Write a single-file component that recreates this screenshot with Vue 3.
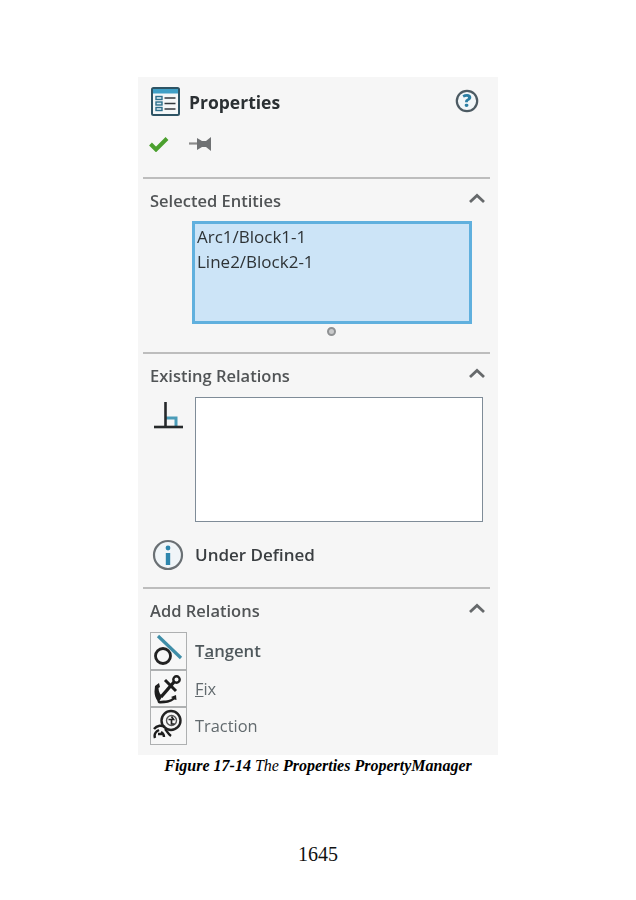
<template>
  <div class="page">
    <div class="panel">
      <div class="head">
        <svg class="head-icon" width="29" height="29" viewBox="0 0 29 29">
          <rect x="1" y="1" width="27" height="27" rx="1.5" fill="#f4f7f8" stroke="#2d5364" stroke-width="2" />
          <rect x="2" y="2" width="25" height="4.5" fill="#3f9fc6" />
          <g fill="#d8eaf2" stroke="#2d6f8c" stroke-width="1.4">
            <rect x="5" y="9.5" width="6" height="3" />
            <rect x="5" y="15" width="6" height="3" />
            <rect x="5" y="20.5" width="6" height="3" />
          </g>
          <path d="M13.5 11h11M13.5 16.5h11M13.5 22h11" stroke="#33393d" stroke-width="1.6" />
        </svg>
        <span class="head-title">Properties</span>
        <svg class="help" width="24" height="24" viewBox="0 0 24 24">
          <circle cx="12" cy="12" r="10.2" fill="#f2f7f9" stroke="#4d5b63" stroke-width="2.2" />
          <text x="12" y="18.2" text-anchor="middle" class="help-mark">?</text>
        </svg>
      </div>

      <div class="actions">
        <svg width="20" height="16" viewBox="0 0 20 16">
          <path d="M1.5 8l5.5 5.5L18 2.5" fill="none" stroke="#4ba02e" stroke-width="4" />
        </svg>
        <svg width="24" height="16" viewBox="0 0 24 16">
          <path d="M0 7.5h10" stroke="#8a8a8a" stroke-width="2.2" />
          <path d="M8 2l5 3h4l5-4v14l-5-4h-4l-5 3z" fill="#6f7173" />
        </svg>
      </div>

      <section class="sec sec-selected">
        <div class="sec-head">
          <span>Selected Entities</span>
          <svg class="chev" width="18" height="11" viewBox="0 0 18 11">
            <path d="M2 9l7-6.5L16 9" fill="none" stroke="#66696b" stroke-width="2.8" />
          </svg>
        </div>
        <div class="entities">
          <div v-for="e in entities" :key="e">{{ e }}</div>
        </div>
        <div class="grip"></div>
      </section>

      <section class="sec sec-existing">
        <div class="sec-head">
          <span>Existing Relations</span>
          <svg class="chev" width="18" height="11" viewBox="0 0 18 11">
            <path d="M2 9l7-6.5L16 9" fill="none" stroke="#66696b" stroke-width="2.8" />
          </svg>
        </div>
        <div class="existing-row">
          <svg class="perp" width="30" height="30" viewBox="0 0 30 30">
            <path d="M12 17h10v9" fill="none" stroke="#4b9cb8" stroke-width="3" />
            <path d="M11.5 1v25" stroke="#26292b" stroke-width="2.6" />
            <path d="M0 26h29" stroke="#26292b" stroke-width="2.6" />
          </svg>
          <div class="relations"></div>
        </div>
        <div class="status">
          <svg width="32" height="32" viewBox="0 0 32 32">
            <circle cx="16" cy="16" r="14" fill="#f0f5f8" stroke="#6a7074" stroke-width="2.2" />
            <circle cx="16" cy="9" r="2.4" fill="#2d86ad" />
            <path d="M16 14v12" stroke="#2d86ad" stroke-width="4.4" />
          </svg>
          <span>Under Defined</span>
        </div>
      </section>

      <section class="sec sec-add">
        <div class="sec-head">
          <span>Add Relations</span>
          <svg class="chev" width="18" height="11" viewBox="0 0 18 11">
            <path d="M2 9l7-6.5L16 9" fill="none" stroke="#66696b" stroke-width="2.8" />
          </svg>
        </div>
        <div class="rel-list">
          <div class="rel">
            <div class="rel-btn">
              <svg width="33" height="33" viewBox="0 0 33 33">
                <circle cx="11" cy="22" r="7.5" fill="none" stroke="#222" stroke-width="2.8" />
                <path d="M6 2l23 22" stroke="#3f8ea8" stroke-width="3.2" />
              </svg>
            </div>
            <span class="rel-name strong">T<u>a</u>ngent</span>
          </div>
          <div class="rel">
            <div class="rel-btn">
              <svg width="33" height="33" viewBox="0 0 33 33">
                <circle cx="24.500" cy="7.500" r="3.200" fill="none" stroke="#1d1d1d" stroke-width="2.400" />
                <path d="M22 10L9 25" stroke="#1d1d1d" stroke-width="3.400" />
                <path d="M13 8l11 11" stroke="#1d1d1d" stroke-width="3" />
                <path d="M3 14l4-3 1 4-1.500 1c0 4 2 7 4 8l-3 5 4-.5c3 0 7-.5 9-2.500l-1.500-1 5-2 .5 5-2-.5c-4 3-9 4-14 4-2 .5-3-1-3-2.500-2-3-3-6-3-9.500z" fill="#1d1d1d" />
              </svg>
            </div>
            <span class="rel-name"><u>F</u>ix</span>
          </div>
          <div class="rel">
            <div class="rel-btn">
              <svg width="33" height="33" viewBox="0 0 33 33">
                <circle cx="19" cy="11.500" r="9.500" fill="none" stroke="#222" stroke-width="2.400" />
                <circle cx="19.500" cy="11.500" r="5" fill="none" stroke="#555" stroke-width="1.400" />
                <path d="M16.500 10.500h5l-2-3M19.500 10.500v4.500h3" fill="none" stroke="#222" stroke-width="1.700" />
                <path d="M2 20c3-4 8-4 11-2M3 29c-1-3 0-6 4-8M9 23c2 1 3 2 3 5M13 20c2 2 3 5 6 7M6 25h5" fill="none" stroke="#1d1d1d" stroke-width="2.400" />
              </svg>
            </div>
            <span class="rel-name">Traction</span>
          </div>
        </div>
      </section>
    </div>

    <p class="caption"><b><i>Figure 17-14</i></b> <i>The</i> <b><i>Properties PropertyManager</i></b></p>
    <div class="page-no">1645</div>
  </div>
</template>

<script setup>
const entities = ['Arc1/Block1-1', 'Line2/Block2-1']
</script>

<style>
html, body {
  background: #fff;
}
</style>

<style scoped>
.page {
  width: 636px;
  height: 900px;
  padding-top: 77px;
  box-sizing: border-box;
  display: flex;
  flex-direction: column;
  align-items: center;
  overflow: hidden;
}

.panel {
  width: 360px;
  height: 678px;
  background: #f6f6f6;
  box-sizing: border-box;
  padding: 0 8px 0 5px;
  font-family: "Open Sans", "Noto Sans", sans-serif;
  color: #333;
  filter: blur(0.5px);
}

.head {
  height: 50px;
  padding: 10px 0 0 8px;
  box-sizing: border-box;
  display: flex;
  align-items: flex-start;
}

.head-title {
  margin-left: 9px;
  margin-top: 2px;
  font-size: 17.5px;
  line-height: 26px;
  font-weight: 700;
  color: #2b3033;
}

.help {
  margin-left: auto;
  margin-right: 11px;
  margin-top: 2px;
}

.help-mark {
  font-family: "Open Sans", sans-serif;
  font-size: 18px;
  font-weight: 800;
  fill: #2c7ea3;
}

.actions {
  height: 50px;
  padding: 9px 0 0 6px;
  box-sizing: border-box;
  display: flex;
  align-items: flex-start;
  gap: 20px;
}

.sec {
  border-top: 2px solid #bdbdbd;
  box-sizing: border-box;
}

.sec-selected {
  height: 175px;
}

.sec-existing {
  height: 235px;
}

.sec-head {
  height: 42px;
  padding: 11px 4px 0 7px;
  box-sizing: border-box;
  display: flex;
  justify-content: space-between;
  font-size: 16.5px;
  line-height: 22px;
  font-weight: 600;
  color: #515456;
}

.sec-add .sec-head {
  height: 43px;
}

.chev {
  margin-top: 3px;
}

.entities {
  width: 280px;
  height: 103px;
  margin-left: 49px;
  box-sizing: border-box;
  border: 3px solid #60b0de;
  background: #cce4f7;
  padding: 0 0 0 2px;
  font-size: 17px;
  line-height: 25px;
  color: #2e3336;
}

.grip {
  width: 9px;
  height: 9px;
  margin: 3px 0 0 184px;
  box-sizing: border-box;
  border: 2px solid #8f9193;
  border-radius: 50%;
  background: #c9cacb;
}

.existing-row {
  display: flex;
  align-items: flex-start;
  margin-top: 1px;
  padding-left: 11px;
}

.perp {
  margin-top: 4px;
  flex: none;
}

.relations {
  width: 288px;
  height: 125px;
  margin-left: 11px;
  box-sizing: border-box;
  border: 1.5px solid #7f8c98;
  background: #fff;
}

.status {
  display: flex;
  align-items: center;
  margin-top: 16px;
  padding-left: 9px;
  font-size: 17px;
  line-height: 32px;
  font-weight: 600;
  color: #3a3e41;
}

.status span {
  margin-left: 11px;
  margin-top: 1px;
}

.rel-list {
  display: flex;
  flex-direction: column;
  padding-left: 7px;
}

.rel {
  display: flex;
  align-items: center;
}

.rel-btn {
  width: 37px;
  height: 37.5px;
  box-sizing: border-box;
  border: 1.5px solid #aeb0b1;
  background: #f7f7f7;
  display: flex;
  align-items: center;
  justify-content: center;
}

.rel-name {
  margin-left: 8px;
  font-size: 16.4px;
  color: #626a6e;
}

.rel-name.strong {
  font-size: 16.7px;
  font-weight: 600;
  color: #4f585c;
}

.caption {
  margin: 0;
  height: 21px;
  font-family: "Liberation Serif", serif;
  font-size: 16px;
  line-height: 21px;
  color: #000;
}

.page-no {
  margin-top: 66px;
  font-family: "Liberation Serif", serif;
  font-size: 20px;
  line-height: 24px;
  color: #111;
}
</style>
